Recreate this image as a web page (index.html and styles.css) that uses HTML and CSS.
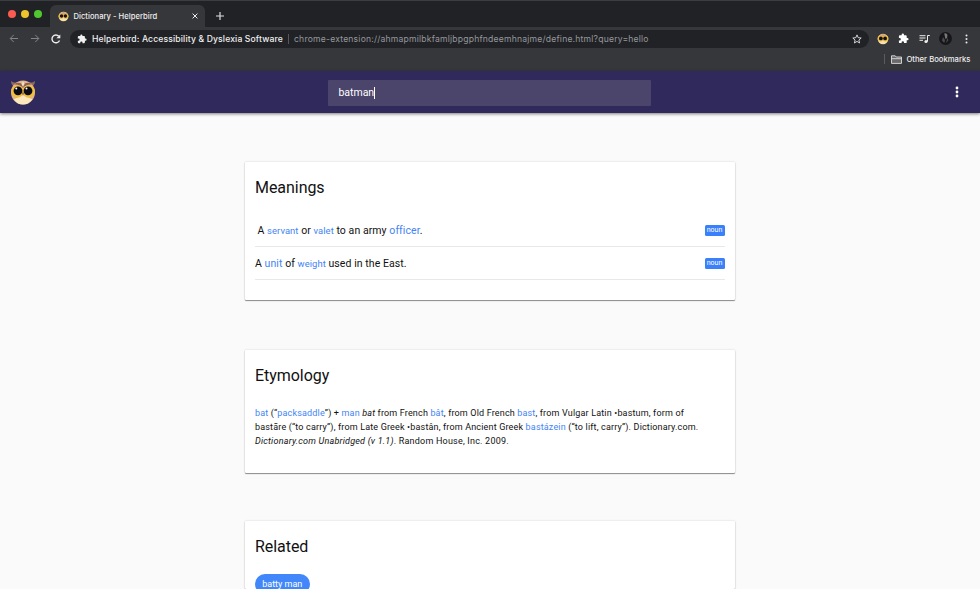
FILE: index.html
```html
<!DOCTYPE html>
<html lang="en">
<head>
<meta charset="utf-8">
<title>Dictionary - Helperbird</title>
<link rel="stylesheet" href="styles.css">
</head>
<body>
<svg class="defs" width="0" height="0">
  <defs>
    <symbol id="owl" viewBox="0 0 26 26">
      <path d="M1 2 Q4 5 13 2.500 Q22 5 25 2 Q25 5.500 22 7.500 L4 7.500 Q1 5.500 1 2Z" fill="#8f6a5c"/>
      <circle cx="13" cy="13.500" r="12" fill="#e0b48f"/>
      <path d="M3.500 20 Q8 19.500 13 14 Q18 19.500 22.500 20 Q19 25.500 13 25.500 Q7 25.500 3.500 20Z" fill="#fde7bd"/>
      <path d="M4 5.500 Q10 5 13 9 Q16 5 22 5.500 L20 4 Q15.500 3 13 6 Q10.500 3 6 4Z" fill="#8f6250"/>
      <path d="M13 2l1.500 3L13 8l-1.500-3z" fill="#f6dcc0"/>
      <circle cx="7.300" cy="12.500" r="6.200" fill="#f1bd3d"/><circle cx="18.700" cy="12.500" r="6.200" fill="#f1bd3d"/>
      <circle cx="8" cy="11.800" r="4.400" fill="#0b0b18"/><circle cx="18" cy="11.800" r="4.400" fill="#0b0b18"/>
      <circle cx="6.300" cy="9.600" r="1" fill="#fff"/><circle cx="16.500" cy="9.600" r="1" fill="#fff"/>
      <path d="M11.900 13.500h2.200L13 17Z" fill="#8a5a3a"/>
    </symbol>
    <symbol id="face" viewBox="0 0 12 12">
      <circle cx="6" cy="6" r="5.300" fill="#f6dfb0"/>
      <path d="M1 3.500Q6 -1.500 11 3.500L10 5H2Z" fill="#cfa17c"/>
      <circle cx="3.500" cy="5.500" r="2.900" fill="#f1bd3d"/><circle cx="8.500" cy="5.500" r="2.900" fill="#f1bd3d"/>
      <circle cx="3.900" cy="5.400" r="1.900" fill="#11111a"/><circle cx="8.100" cy="5.400" r="1.900" fill="#11111a"/>
    </symbol>
    <symbol id="puzzle" viewBox="0 0 24 24">
      <path d="M20.500 11H19V7a2 2 0 0 0-2-2h-4V3.500a2.500 2.500 0 0 0-5 0V5H4a2 2 0 0 0-2 2v3.800h1.500a2.700 2.700 0 0 1 0 5.400H2V20a2 2 0 0 0 2 2h3.800v-1.500a2.700 2.700 0 0 1 5.400 0V22H17a2 2 0 0 0 2-2v-4h1.500a2.500 2.500 0 0 0 0-5z"/>
    </symbol>
  </defs>
</svg>
<div class="tabstrip">
  <div class="lights"><i class="red"></i><i class="yellow"></i><i class="green"></i></div>
  <div class="tab">
    <svg class="fav"><use href="#face"/></svg>
    <span class="tab-title">Dictionary - Helperbird</span>
    <svg class="close" viewBox="0 0 6 6"><path d="M.6.6l4.800 4.800M5.400.6L.6 5.400"/></svg>
  </div>
  <svg class="plus" viewBox="0 0 8 8"><path d="M4 0v8M0 4h8"/></svg>
</div>
<div class="toolbar">
  <svg class="nav dim" viewBox="0 0 10 10"><path d="M9.500 5H1M4.700 1L.8 5l3.900 4"/></svg>
  <svg class="nav dim" viewBox="0 0 10 10"><path d="M.5 5H9M5.300 1l3.900 4-3.900 4"/></svg>
  <svg class="nav reload" viewBox="0 0 10 10"><path d="M8.500 6.400A3.900 3.900 0 1 1 7.800 2.300"/><path class="solid" d="M9.300.4v3.900H5.400z"/></svg>
  <div class="omnibox">
    <svg class="puz"><use href="#puzzle"/></svg>
    <span class="ext">Helperbird: Accessibility &amp; Dyslexia Software</span>
    <span class="bar"></span>
    <span class="url">chrome-extension://ahmapmilbkfamljbpgphfndeemhnajme/define.html?query=hello</span>
    <svg class="star" viewBox="0 0 10 10"><path d="M5 .9l1.200 2.800 3 .3L6.900 6l.7 3L5 7.400 2.400 9l.7-3L.8 4l3-.3z"/></svg>
  </div>
  <div class="actions">
    <svg class="face"><use href="#face"/></svg>
    <svg class="puz2"><use href="#puzzle"/></svg>
    <svg class="music" viewBox="0 0 11 10"><path d="M.5 1.700h6M.5 4h6M.5 6.300h3.500M8.500 7.500V1.500h2.300"/><circle cx="7" cy="7.500" r="1.600"/></svg>
    <svg class="avatar" viewBox="0 0 13 13"><circle cx="6.500" cy="6.500" r="6.500" fill="#17171a"/><path d="M5.200 1.500Q7.500.5 8.500 3L8 6 6.500 7z" fill="#77777a"/><path d="M4 5l2 3-.7 3L3 8.500zM8.500 5.500l.8 3L7 11z" fill="#4b4b4f"/></svg>
    <svg class="dots" viewBox="0 0 3 10"><circle cx="1.500" cy="1.400" r="1"/><circle cx="1.500" cy="5" r="1"/><circle cx="1.500" cy="8.600" r="1"/></svg>
  </div>
</div>
<div class="bookmarks">
  <span class="bm-line"></span>
  <svg class="folder" viewBox="0 0 11 9"><path d="M.5 8.400V.8h3.700l1 1.200h5.300v6.400zM.5 3.700h10" /></svg>
  <span>Other Bookmarks</span>
</div>
<header class="appbar">
  <svg class="logo"><use href="#owl"/></svg>
  <div class="search"><span>batman</span><i class="caret"></i></div>
  <svg class="more" viewBox="0 0 4 12"><circle cx="2" cy="2" r="1.400"/><circle cx="2" cy="6" r="1.400"/><circle cx="2" cy="10" r="1.400"/></svg>
</header>
<main>
  <section class="card meanings">
    <h2>Meanings</h2>
    <div class="row first"><p>A <a>servant</a> or <a>valet</a> to an army <a class="big">officer</a>.</p><span class="badge">noun</span></div>
    <div class="row second"><p>A <a class="big">unit</a> of <a>weight</a> used in the East.</p><span class="badge">noun</span></div>
  </section>
  <section class="card etymology">
    <h2>Etymology</h2>
    <div class="ety">
      <p class="l1"><a>bat</a> (“<a>packsaddle</a>”) + <a>man</a> <em>bat</em> from French <a>bât</a>, from Old French <a>bast</a>, from Vulgar Latin •bastum, form of</p>
      <p class="l2">bastāre (“to carry”), from Late Greek •bastân, from Ancient Greek <a>bastázein</a> (“to lift, carry”). Dictionary.com.</p>
      <p class="l3"><em>Dictionary.com Unabridged (v 1.1)</em>. Random House, Inc. 2009.</p>
    </div>
  </section>
  <section class="card related">
    <h2>Related</h2>
    <span class="chip">batty man</span>
  </section>
</main>
</body>
</html>
```
FILE: styles.css
```css
* { box-sizing: border-box; }
html { overflow: hidden; }
body { margin: 0; height: 589px; overflow: hidden; background: #fafafa; font-family: Roboto, sans-serif; color: #111; display: flex; flex-direction: column; }
svg { display: block; flex: none; overflow: visible; }
.defs { position: absolute; }
p, h2 { margin: 0; font-weight: 400; white-space: nowrap; }
.tabstrip { height: 27px; flex: none; background: #202226; border-top: 1px solid #3b3d40; display: flex; align-items: flex-end; }
.lights { display: flex; gap: 5px; padding-left: 8px; width: 50px; height: 22px; align-items: flex-start; padding-top: 5px; }
.lights i { width: 8px; height: 8px; border-radius: 50%; }
.red { background: #fc5b52; }
.yellow { background: #eec32c; }
.green { background: #50c92e; }
.tab { width: 155px; height: 22px; background: #36373a; border-radius: 6px 6px 0 0; display: flex; align-items: center; padding: 0 7px 0 8px; font: 500 7.600px Inter, sans-serif; color: #eee; }
.fav { width: 11px; height: 11px; margin-right: 4.500px; }
.tab-title { flex: 1; white-space: nowrap; letter-spacing: .03px; }
.close { width: 6px; height: 6px; stroke: #eee; stroke-width: 1; }
.plus { width: 8px; height: 8px; margin: 0 0 7px 11px; stroke: #ddd; stroke-width: 1.200; }
.toolbar { height: 23px; flex: none; background: #36373a; display: flex; align-items: center; padding-left: 9px; }
.nav { width: 10px; height: 9px; margin-right: 11px; fill: none; stroke: #eee; stroke-width: 1.100; }
.nav.dim { stroke: #85868a; }
.nav.reload { width: 10px; height: 10px; margin-right: 9px; stroke-width: 1.400; }
.solid { fill: #eee; stroke: none; }
.omnibox { width: 799px; height: 18px; border-radius: 9px; background: #202226; display: flex; align-items: center; padding: 0 7px; font: 500 8.600px Inter, sans-serif; color: #f0f0f0; white-space: nowrap; }
.puz { width: 10px; height: 10px; fill: #f0f0f0; margin-right: 5px; }
.ext { width: 196px; letter-spacing: .14px; }
.bar { width: 1px; height: 10px; background: #55575b; margin-right: 5px; }
.url { color: #97989c; font-weight: 400; flex: 1; letter-spacing: .2px; }
.star { width: 10px; height: 10px; fill: none; stroke: #e2e2e2; stroke-width: .9; }
.actions { flex: 1; display: flex; align-items: center; padding-left: 8px; }
.face { width: 12px; height: 12px; }
.puz2 { width: 11px; height: 11px; fill: #fff; margin-left: 9px; }
.music { width: 11px; height: 10px; margin-left: 10px; fill: #eee; stroke: #eee; stroke-width: 1; }
.music path { fill: none; }
.music circle { stroke: none; }
.avatar { width: 13px; height: 13px; margin-left: 9px; }
.dots { width: 3px; height: 10px; margin-left: 13px; fill: #eee; }
.bookmarks { height: 21px; flex: none; background: #36373a; display: flex; align-items: flex-start; justify-content: flex-end; padding: 4px 9.500px 0 0; font: 500 7.700px/11px Inter, sans-serif; color: #eee; }
.bm-line { width: 1px; height: 10px; background: #5b5c60; margin-right: 6px; }
.folder { width: 11px; height: 9px; margin: 1px 4.500px 0 0; fill: #69696c; stroke: #ddd; stroke-width: .9; }
.appbar { height: 42px; flex: none; background: #30295b; box-shadow: 0 1px 3px rgba(0,0,0,.5); display: flex; align-items: center; padding: 0 21.500px 0 10px; z-index: 1; }
.logo { width: 26px; height: 26px; }
.search { width: 323px; height: 26px; margin-left: 292.400px; margin-top: 1px; background: #4b456c; border-radius: 1px; display: flex; align-items: center; padding-left: 10px; color: #fff; font-size: 10.500px; }
.caret { width: 1px; height: 12px; background: #fff; }
.more { width: 4px; height: 12px; margin-left: auto; fill: #fff; }
main { display: flex; flex-direction: column; align-items: center; padding-top: 49px; }
.card { width: 490px; flex: none; background: #fff; border-radius: 1px; box-shadow: 0 1px 1px rgba(0,0,0,.42), 0 0 2px rgba(0,0,0,.18); padding: 0 10.500px 0 10px; }
.meanings { height: 138px; margin-bottom: 49.500px; }
.etymology { height: 123px; margin-bottom: 48.500px; }
.related { height: 68px; }
h2 { font-size: 16px; line-height: 20px; padding-top: 16px; height: 51px; letter-spacing: -.05px; }
.meanings h2 { height: 52px; }
.row { height: 33px; border-bottom: 1px solid #e8e8e8; display: flex; align-items: center; justify-content: space-between; font-size: 10.500px; letter-spacing: .07px; }
.row a { font-size: 9.400px; }
.row a.big { font-size: 10.500px; }
.first p { padding-left: 2.500px; }
a { color: #4384f5; }
.badge { width: 20px; height: 11px; border-radius: 1.500px; background: #3b80fb; color: #fff; font-size: 7px; line-height: 11px; text-align: center; letter-spacing: 0; }
.ety { font-size: 9px; line-height: 14px; padding-top: 5px; letter-spacing: .165px; }
.l3 { letter-spacing: .21px; }
.chip { display: block; width: 54.500px; height: 20px; border-radius: 10px; background: #4287fa; color: #fff; font-size: 9px; line-height: 20px; text-align: center; margin-top: 2px; white-space: nowrap; }
```
